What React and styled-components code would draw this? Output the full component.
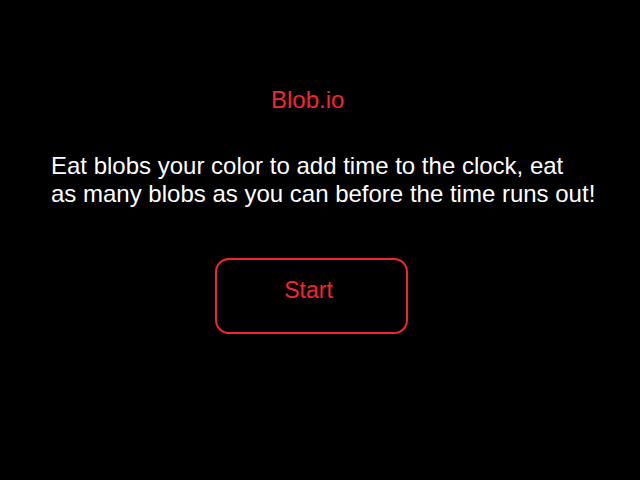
import React from "react";
import styled, { createGlobalStyle } from "styled-components";

const GlobalStyle = createGlobalStyle`
  html, body {
    margin: 0;
    padding: 0;
    background: #000;
    font-family: "Liberation Sans", Arial, Helvetica, sans-serif;
  }
`;

const Screen = styled.div`
  width: 640px;
  height: 480px;
  background: #000;
  display: flex;
  flex-direction: column;
  padding: 86px 0 0 51px;
  box-sizing: border-box;
`;

const Column = styled.div`
  width: 560px;
  display: flex;
  flex-direction: column;
`;

const Title = styled.h1`
  margin: 0;
  font-size: 24px;
  font-weight: 400;
  line-height: 28px;
  color: #f2262f;
  padding-left: 220px;
`;

const Desc = styled.p`
  margin: 38px 0 0;
  font-size: 24px;
  line-height: 28px;
  color: #fff;
  white-space: nowrap;
`;

const StartBtn = styled.button`
  margin: 50px 0 0 164px;
  width: 193px;
  height: 76px;
  padding: 0 6px 12px 0;
  background: transparent;
  border: 2px solid #f2262f;
  border-radius: 14px;
  color: #f2262f;
  font-family: inherit;
  font-size: 23px;
  cursor: pointer;
`;

function App() {
  return (
    <>
      <GlobalStyle />
      <Screen>
        <Column>
          <Title>Blob.io</Title>
          <Desc>
            Eat blobs your color to add time to the clock, eat
            <br />
            as many blobs as you can before the time runs out!
          </Desc>
          <StartBtn>Start</StartBtn>
        </Column>
      </Screen>
    </>
  );
}

export default App;
